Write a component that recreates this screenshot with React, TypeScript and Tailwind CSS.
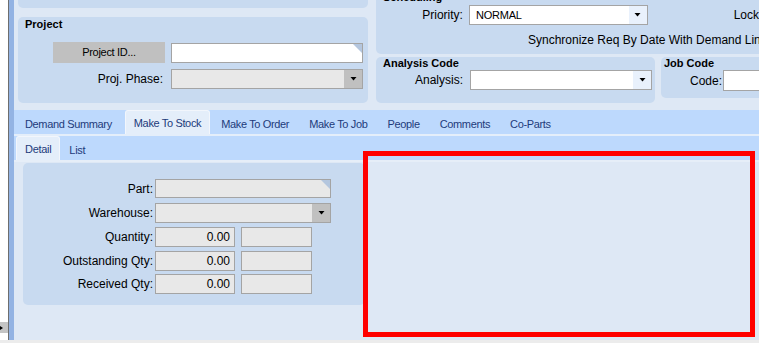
import React from 'react';

const DownArrow = () => (
  <svg width="7" height="4" viewBox="0 0 7 4" className="block">
    <polygon points="0.5,0 6.5,0 3.5,3.5" fill="#000" />
  </svg>
);

const Corner = () => (
  <svg width="9" height="9" viewBox="0 0 9 9" className="absolute right-0 top-0">
    <polygon points="0,0 9,0 9,9" fill="#b4c6de" />
  </svg>
);

interface ComboProps {
  width: string;
  light?: boolean;
  text?: string;
  height?: string;
}

const Combo: React.FC<ComboProps> = ({ width, light, text, height = 'h-[20px]' }) => (
  <div
    className={`${width} ${height} flex border border-[#a4a4a4] ${light ? 'bg-white' : 'bg-[#e8e8e8]'}`}
  >
    <div className="flex-1 pl-[6px] leading-[18px] text-[11px] tracking-[-0.2px]">{text}</div>
    <div
      className={`w-[18px] flex items-center justify-center ${light ? 'bg-[#e9f1fc]' : 'bg-[#c0c0c0]'}`}
    >
      <DownArrow />
    </div>
  </div>
);

const Box: React.FC<{ width: string; value?: string; height?: string }> = ({
  width,
  value,
  height = 'h-[20px]',
}) => (
  <div
    className={`${width} ${height} border border-[#a4a4a4] bg-[#e8e8e8] text-right pr-[4px] text-[12px] leading-[18px]`}
  >
    {value}
  </div>
);

const tabs = [
  'Demand Summary',
  'Make To Stock',
  'Make To Order',
  'Make To Job',
  'People',
  'Comments',
  'Co-Parts',
];

export default function App() {
  return (
    <div className="w-[759px] h-[343px] overflow-hidden flex flex-col bg-[#ececec] font-['Liberation_Sans',Arial,sans-serif] text-black">
      <div className="flex h-[340px] shrink-0">
        {/* left edge strip */}
        <div className="w-[8px] bg-white flex flex-col justify-end">
          <div className="h-[11px] mb-[7px] bg-[#c4c4c4] flex items-center">
            <svg width="3" height="4" viewBox="0 0 3 4">
              <polygon points="0,0 3,2 0,4" fill="#000" />
            </svg>
          </div>
        </div>
        <div className="w-[1px] bg-[#6e6e6e]" />
        <div className="w-[5px] bg-[#93b3e3]" />

        {/* main */}
        <div className="flex-1 flex flex-col bg-[#dee8f5] relative min-w-0">
          {/* header panels */}
          <div className="h-[110px] flex shrink-0">
            <div className="ml-[4px] w-[350px] flex flex-col">
              <div className="h-[8px] rounded-b-[5px] bg-[#c8daf0]" />
              <div className="mt-[9px] h-[86px] rounded-[5px] bg-[#c8daf0] flex flex-col">
                <div className="pl-[7px] pt-[1px] text-[11px] font-bold leading-[12px]">Project</div>
                <div className="mt-[12px] h-[21px] flex items-center">
                  <div className="ml-[35px] w-[112px] h-[21px] bg-[#c0c0c0] text-center text-[11px] tracking-[-0.3px] leading-[21px]">
                    Project ID...
                  </div>
                  <div className="ml-[6px] w-[192px] h-[20px] bg-white border border-[#a4a4a4] relative">
                    <Corner />
                  </div>
                </div>
                <div className="mt-[6px] h-[20px] flex items-center">
                  <div className="w-[153px] pr-[8px] text-right text-[12px]">Proj. Phase:</div>
                  <Combo width="w-[192px]" />
                </div>
              </div>
            </div>

            <div className="ml-[8px] flex-1 flex flex-col min-w-0">
              <div className="-mt-[16px] h-[70px] rounded-bl-[5px] bg-[#c8daf0] flex flex-col whitespace-nowrap">
                <div className="pl-[7px] pt-[6px] text-[11px] font-bold leading-[14px]">Scheduling</div>
                <div className="mt-[1px] h-[20px] flex items-center">
                  <div className="w-[94px] pr-[6px] text-right text-[12px]">Priority:</div>
                  <Combo width="w-[181px]" light text="NORMAL" />
                  <div className="ml-[86px] text-[12px]">Lock</div>
                </div>
                <div className="mt-[8px] h-[14px] pl-[152px] text-[12px] leading-[14px]">
                  Synchronize Req By Date With Demand Line
                </div>
              </div>
              <div className="mt-[3px] flex items-start">
                <div className="w-[279px] h-[46px] rounded-[5px] bg-[#c8daf0] flex flex-col">
                  <div className="pl-[7px] text-[11px] font-bold leading-[12px]">Analysis Code</div>
                  <div className="mt-[1px] h-[20px] flex items-center">
                    <div className="w-[94px] pr-[7px] text-right text-[12px]">Analysis:</div>
                    <Combo width="w-[182px]" light />
                  </div>
                </div>
                <div className="ml-[6px] flex-1 h-[41px] rounded-l-[5px] bg-[#c8daf0] flex flex-col">
                  <div className="pl-[3px] text-[11px] font-bold leading-[12px]">Job Code</div>
                  <div className="mt-[1px] h-[21px] flex items-center">
                    <div className="w-[62px] pr-[1px] text-right text-[12px]">Code:</div>
                    <div className="flex-1 h-[21px] bg-white border border-[#a4a4a4] border-r-0" />
                  </div>
                </div>
              </div>
            </div>
          </div>

          {/* main tabs */}
          <div className="h-[24px] shrink-0 bg-[#bdd9fd] flex pl-[2px] gap-[2px] text-[11px] tracking-[-0.35px] text-[#1d3b7b] whitespace-nowrap">
            {tabs.map((t) =>
              t === 'Make To Stock' ? (
                <div
                  key={t}
                  className="ml-[2px] h-[24px] px-[8px] pt-[5px] leading-[14px] bg-[#e4eefa] rounded-t-[3px] border-t border-x border-[#f2f6fc]"
                >
                  {t}
                </div>
              ) : (
                <div key={t} className="h-[24px] px-[9px] pt-[7px] leading-[14px]">
                  {t}
                </div>
              )
            )}
          </div>
          <div className="h-[2px] shrink-0 bg-[#e4eefa]" />

          {/* sub tabs */}
          <div className="h-[24px] shrink-0 bg-[#bdd9fd] flex pl-[2px] text-[11px] tracking-[-0.3px] text-[#1d3b7b]">
            <div className="h-[24px] px-[8px] pt-[5px] leading-[14px] bg-[#e4eefa] rounded-t-[3px] border-t border-x border-[#f2f6fc]">
              Detail
            </div>
            <div className="h-[24px] px-[9px] pt-[7px] leading-[14px]">List</div>
          </div>
          <div className="h-[2px] shrink-0 bg-[#e6eef8]" />

          {/* detail content */}
          <div className="flex-1">
            <div className="ml-[9px] mt-[1px] w-[342px] h-[142px] rounded-[5px] bg-[#c8daf0] flex flex-col text-[12px]">
              <div className="mt-[16px] h-[19px] flex items-center">
                <div className="w-[132px] pr-[2px] text-right">Part:</div>
                <div className="w-[176px] h-[19px] bg-[#e8e8e8] border border-[#a4a4a4] relative">
                  <Corner />
                </div>
              </div>
              <div className="mt-[5px] h-[20px] flex items-center">
                <div className="w-[132px] pr-[2px] text-right">Warehouse:</div>
                <Combo width="w-[176px]" />
              </div>
              {[
                ['Quantity:', 'mt-[4px]'],
                ['Outstanding Qty:', 'mt-[4px]'],
                ['Received Qty:', 'mt-[3px]'],
              ].map(([label, mt]) => (
                <div key={label} className={`${mt} h-[20px] flex items-center`}>
                  <div className="w-[132px] pr-[2px] text-right">{label}</div>
                  <Box width="w-[80px]" value="0.00" />
                  <div className="ml-[6px]">
                    <Box width="w-[71px]" />
                  </div>
                </div>
              ))}
            </div>
          </div>

          {/* highlight overlay */}
          <div className="absolute left-[349px] top-[151px] w-[392px] h-[186px] border-[5px] border-[#ff0000] pointer-events-none" />
        </div>
      </div>
    </div>
  );
}
